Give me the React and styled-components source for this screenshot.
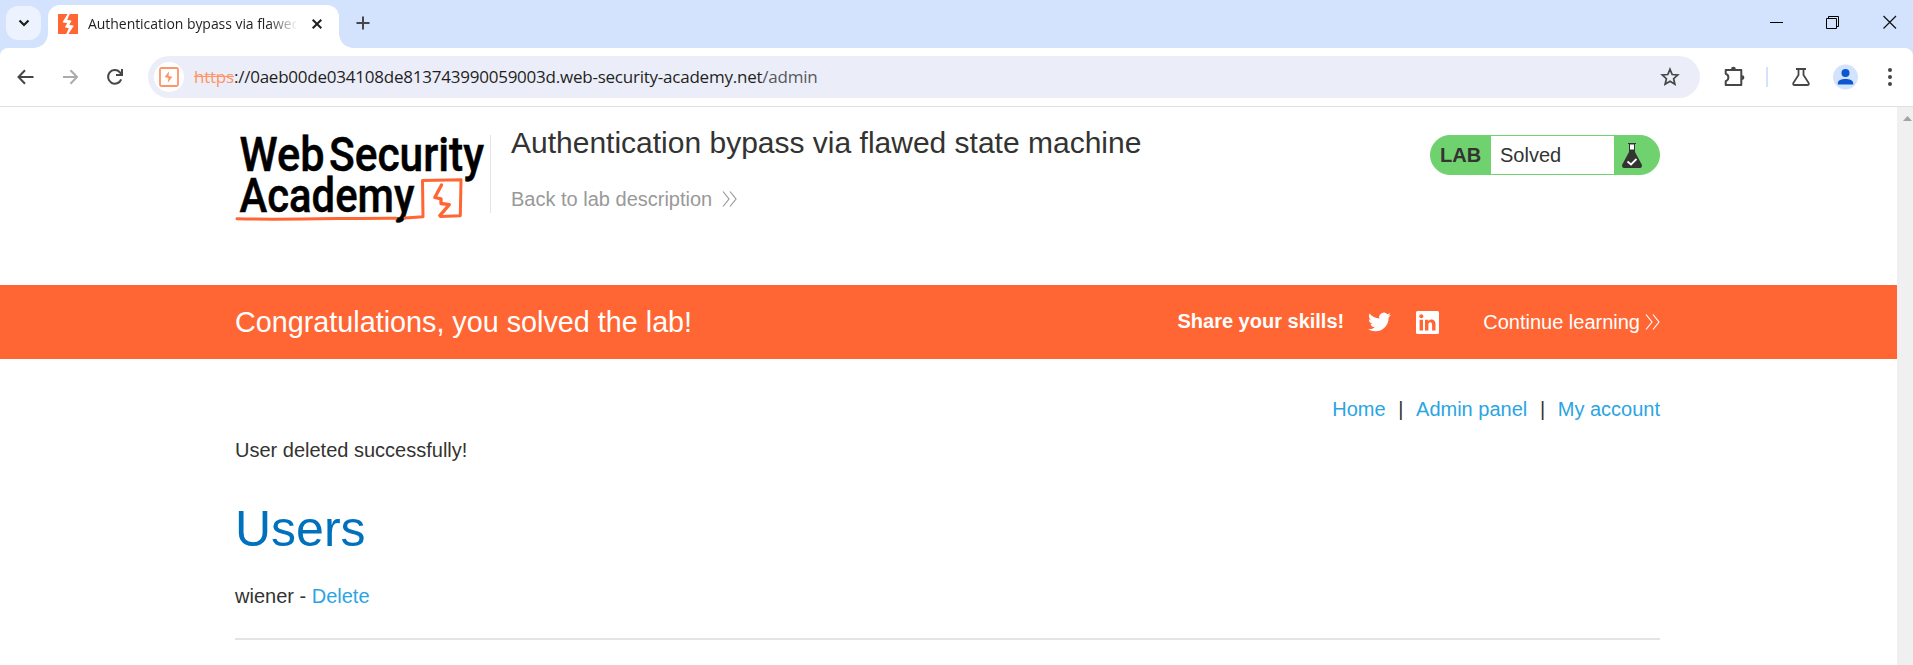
import React from "react";
import styled, { createGlobalStyle } from "styled-components";

const Global = createGlobalStyle`
  * { box-sizing: border-box; }
  html, body { margin: 0; padding: 0; background: #fff; overflow: hidden; }
  body { font-family: "Liberation Sans", Arial, sans-serif; font-size: 20px; color: #333332; }
  svg { display: block; flex: none; overflow: visible; }
`;

const Window = styled.div`
  width: 100%;
  height: 665px;
  display: flex;
  flex-direction: column;
`;

const TabStrip = styled.div`
  height: 48px;
  flex: none;
  display: flex;
  background: #d3e2fd;
  padding: 5px 0 0 6px;
`;

const TabSearch = styled.div`
  width: 35px;
  height: 34px;
  margin-top: 1px;
  border-radius: 12px;
  background: #ecf2fe;
  display: flex;
  align-items: center;
  justify-content: center;
`;

const Tab = styled.div`
  position: relative;
  width: 291px;
  height: 43px;
  margin-left: 7px;
  padding: 0 14px 6px 10px;
  display: flex;
  align-items: center;
  border-radius: 12px 12px 0 0;
  background: #fff;
  &::before, &::after {
    content: "";
    position: absolute;
    bottom: 0;
    width: 14px;
    height: 14px;
  }
  &::before {
    left: -14px;
    background: radial-gradient(circle at 0 0, transparent 13.5px, #fff 14px);
  }
  &::after {
    right: -14px;
    background: radial-gradient(circle at 100% 0, transparent 13.5px, #fff 14px);
  }
`;

const TabTitle = styled.div`
  width: 208px;
  margin: 1px 16px 0 10px;
  overflow: hidden;
  white-space: nowrap;
  font: 14px/22px "Open Sans", "Noto Sans", sans-serif;
  letter-spacing: -0.05px;
  color: #1f1f1f;
  mask-image: linear-gradient(to right, #000 180px, transparent 210px);
`;

const NewTab = styled.div`
  margin: 11px 0 0 17px;
`;

const WindowControls = styled.div`
  margin: 10px 16px 0 auto;
  display: flex;
  gap: 43px;
`;

const Toolbar = styled.div`
  height: 59px;
  flex: none;
  display: flex;
  align-items: center;
  padding: 0 16px 1px 16px;
  border-bottom: 1px solid #dfe0e1;
  border-radius: 8px 8px 0 0;
  background: #fff;
`;

const Chrome = styled.div`
  flex: none;
  background: linear-gradient(#d3e2fd 60px, #fff 60px);
`;

const NavButtons = styled.div`
  display: flex;
  align-items: center;
  gap: 25px;
  width: 132px;
`;

const AddressBar = styled.div`
  width: 1552px;
  height: 42px;
  border-radius: 21px;
  background: #ebeef8;
  display: flex;
  align-items: center;
  padding: 0 20px 0 6px;
`;

const SiteBadge = styled.div`
  width: 30px;
  height: 30px;
  border-radius: 50%;
  background: #fff;
  display: flex;
  align-items: center;
  justify-content: center;
`;

const Address = styled.div`
  flex: 1;
  margin: 1px 0 0 10px;
  white-space: nowrap;
  font: 17px/26px "Open Sans", "Noto Sans", sans-serif;
  letter-spacing: -0.23px;
  color: #1f1f1f;
`;

const Scheme = styled.span`
  color: #ff9466;
  text-decoration: line-through;
`;

const UrlPath = styled.span`
  color: #55585e;
`;

const ToolbarActions = styled.div`
  display: flex;
  align-items: center;
  margin-left: 23px;
`;

const Divider = styled.div`
  width: 2px;
  height: 20px;
  margin: 0 23px 0 21px;
  background: #d3e2fd;
`;

const Viewport = styled.div`
  flex: 1;
  display: flex;
  min-height: 0;
`;

const Page = styled.main`
  flex: 1;
  min-width: 0;
`;

const Scrollbar = styled.div`
  width: 16px;
  background: #f0f0f0;
  padding: 9px 0 0 6px;
`;

const Container = styled.div`
  width: 1425px;
  margin-left: 235px;
`;

const LabHeader = styled(Container)`
  height: 178px;
  padding-top: 28px;
  display: flex;
  align-items: flex-start;
`;

const LogoBox = styled.div`
  width: 256px;
  height: 78px;
  border-right: 1px solid #e4e4e4;
`;

const TitleBlock = styled.div`
  margin: -9px 0 0 20px;
  flex: 1;
`;

const Title = styled.h2`
  margin: 0;
  font-size: 30px;
  line-height: 34px;
  font-weight: 400;
  white-space: nowrap;
`;

const BackLink = styled.a`
  margin-top: 27px;
  display: flex;
  align-items: center;
  gap: 10px;
  line-height: 24px;
  color: #999;
`;

const Status = styled.div`
  width: 230px;
  height: 40px;
  border: 1px solid #70d16f;
  border-radius: 20px;
  background: #70d16f;
  display: flex;
  line-height: 39px;
  overflow: hidden;
`;

const StatusLabel = styled.div`
  width: 60px;
  padding-left: 9px;
  font-weight: 700;
`;

const StatusValue = styled.div`
  width: 123px;
  padding-left: 9px;
  background: #fff;
`;

const StatusIcon = styled.div`
  padding: 7px 0 0 8px;
`;

const Banner = styled.section`
  height: 74px;
  background: #ff6633;
  color: #fff;
`;

const BannerRow = styled(Container)`
  height: 74px;
  display: flex;
  align-items: center;
`;

const BannerTitle = styled.div`
  flex: 1;
  font-size: 28.75px;
  white-space: nowrap;
`;

const Share = styled.div`
  font-weight: 700;
  margin: -2px 24px 0 0;
`;

const Continue = styled.a`
  display: flex;
  align-items: center;
  gap: 5px;
  margin-left: 44px;
`;

const SocialIcons = styled.div`
  display: flex;
  align-items: center;
  gap: 25px;
`;

const TopLinks = styled.nav`
  display: flex;
  justify-content: flex-end;
  padding-top: 38px;
  line-height: 24px;
  white-space: pre;
`;

const Link = styled.a`
  color: #2ba5e2;
`;

const Separator = styled.span`
  width: 30.5px;
  text-align: center;
`;

const Message = styled.p`
  margin: 17px 0 0;
  line-height: 24px;
`;

const Heading = styled.h1`
  margin: 37px 0 0;
  font-size: 50px;
  line-height: 60px;
  font-weight: 400;
  color: #0071bd;
`;

const UserRow = styled.div`
  margin-top: 25px;
  line-height: 24px;
`;

const Rule = styled.div`
  margin-top: 30px;
  height: 2px;
  background: #e4e4e4;
`;

function Favicon() {
  return (
    <svg width="20" height="20" viewBox="0 0 20 20">
      <rect width="20" height="20" fill="#ff6633" />
      <path d="M11.8 0 H9.6 L4.5 8.3 L9.2 9.3 L6.9 13.3 L10.8 14.3 L8.2 20 H10.4 L15.8 11.7 L11.3 10.7 L13.6 6.7 L9.2 5.8 Z" fill="#fff" />
    </svg>
  );
}

function SiteIcon() {
  return (
    <svg width="20" height="20" viewBox="0 0 20 20">
      <rect x="1" y="1" width="18" height="18" rx="1.5" fill="none" stroke="#ff9466" strokeWidth="1.8" />
      <g transform="translate(-.5 1) scale(.95)">
        <path d="M11.2 3.5 L6.4 9.5 L10.4 10.5 L9.8 15.6 L14.6 9.2 L10.6 8.4 Z" fill="#ff9466" />
      </g>
    </svg>
  );
}

function Chevrons({ color }) {
  return (
    <svg width="15" height="16" viewBox="0 0 15 16">
      <path d="M1 .5 L7 8 L1 15.5 M8 .5 L14 8 L8 15.5" fill="none" stroke={color} strokeWidth="1.2" />
    </svg>
  );
}

function Logo() {
  return (
    <svg width="256" height="90" viewBox="235 135 256 90" fill="#000">
      <g fontFamily="Roboto, sans-serif" fontWeight="500" fontSize="48" stroke="#000" strokeWidth=".5">
        <text x="239.500" y="171" textLength="85" lengthAdjust="spacingAndGlyphs">Web</text>
        <text x="329" y="171" textLength="155" lengthAdjust="spacingAndGlyphs">Security</text>
        <text x="239.500" y="211.700" textLength="175" lengthAdjust="spacingAndGlyphs">Academy</text>
      </g>
      <g fill="none" stroke="#ff6633" strokeLinejoin="round" strokeLinecap="round">
        <path d="M237 218.700 C280 220.200 360 217.800 396 218.200 M405 218 L423 216.800 L422.500 180.500 L461 179.700 L460.300 215.800 L440.500 216.400" strokeWidth="3" />
        <path d="M441.500 185 L434.800 197.500 L441 198.800 L441 203.500 L449.300 204.600 L439.800 215.600" strokeWidth="3.300" />
      </g>
    </svg>
  );
}

export default function App() {
  return (
    <Window>
      <Global />
      <Chrome>
        <TabStrip>
          <TabSearch>
            <svg width="12" height="8" viewBox="0 0 12 8"><path d="M1.500 1.500 L6 6 L10.500 1.500" fill="none" stroke="#1f1f1f" strokeWidth="2.200" /></svg>
          </TabSearch>
          <Tab>
            <Favicon />
            <TabTitle>Authentication bypass via flawed state machine</TabTitle>
            <svg width="10" height="10" viewBox="0 0 10 10"><path d="M.7 .7 L9.300 9.300 M9.300 .7 L.7 9.300" stroke="#1f1f1f" strokeWidth="2" /></svg>
          </Tab>
          <NewTab>
            <svg width="14" height="14" viewBox="0 0 14 14"><path d="M7 .5 V13.500 M.5 7 H13.500" stroke="#444746" strokeWidth="2" /></svg>
          </NewTab>
          <WindowControls>
            <svg width="13" height="14" viewBox="0 0 13 14"><path d="M0 7.500 H13" stroke="#000" /></svg>
            <svg width="14" height="14" viewBox="0 0 14 14"><path d="M.5 3.500 H10.500 V13.500 H.5 Z M2.500 3 V1.500 H12.500 V11.500 H11" fill="none" stroke="#000" /></svg>
            <svg width="14" height="14" viewBox="0 0 14 14"><path d="M.5 1 L13 13.500 M13 1 L.5 13.500" stroke="#111" strokeWidth="1.200" /></svg>
          </WindowControls>
        </TabStrip>
        <Toolbar>
          <NavButtons>
            <svg width="19" height="16" viewBox="0 0 19 16"><path d="M17.500 8 H3 M9 1.300 L2.500 8 L9 14.700" fill="none" stroke="#444746" strokeWidth="2" /></svg>
            <svg width="19" height="16" viewBox="0 0 19 16"><path d="M3 8 H16.500 M10.500 1.300 L17 8 L10.500 14.700" fill="none" stroke="#aaacab" strokeWidth="2" /></svg>
            <svg width="20" height="16" viewBox="0 0 20 16"><path d="M17.200 10.300 A6.800 6.800 0 1 1 15.800 3.200 L18 5.600 M18 0 V6 H12" fill="none" stroke="#444746" strokeWidth="2" /></svg>
          </NavButtons>
          <AddressBar>
            <SiteBadge><SiteIcon /></SiteBadge>
            <Address><Scheme>https</Scheme>://0aeb00de034108de813743990059003d.web-security-academy.net<UrlPath>/admin</UrlPath></Address>
            <svg width="20" height="20" viewBox="0 0 20 20"><path d="M10 2.300 L12.200 7.500 L17.800 8 L13.600 11.700 L14.900 17.200 L10 14.300 L5.100 17.200 L6.400 11.700 L2.200 8 L7.800 7.500 Z" fill="none" stroke="#444746" strokeWidth="1.700" /></svg>
          </AddressBar>
          <ToolbarActions>
            <svg width="22" height="22" viewBox="0 0 22 22"><path d="M2.700 3.900 H18.300 V19 H2.700 V15.200 C6.300 13.800 6.300 9.200 2.700 7.800 Z" fill="none" stroke="#444746" strokeWidth="2" strokeLinejoin="round" /><path d="M8 3.200 A2.400 2.400 0 0 1 12.800 3.200 Z M19 9.200 A2.400 2.400 0 0 1 19 14 Z" fill="#444746" /></svg>
            <Divider />
            <svg width="20" height="20" viewBox="0 0 20 20"><path d="M5 2 H15 M7.500 2 V8 L2.300 16 Q1.800 18 3.500 18 H16.500 Q18.200 18 17.700 16 L12.500 8 V2" fill="none" stroke="#444746" strokeWidth="1.800" /></svg>
            <svg width="77" height="26" viewBox="0 0 77 26"><circle cx="34.500" cy="13" r="12.500" fill="#d3e2fd" /><circle cx="34.500" cy="9" r="4" fill="#0b57d0" /><path d="M26.800 20.500 V19 C26.800 13.500 42.200 13.500 42.200 19 V20.500 Z" fill="#0b57d0" /></svg>
            <svg width="4" height="20" viewBox="0 0 4 20"><g fill="#444746"><circle cx="2" cy="3" r="2" /><circle cx="2" cy="10" r="2" /><circle cx="2" cy="17" r="2" /></g></svg>
          </ToolbarActions>
        </Toolbar>
      </Chrome>
      <Viewport>
        <Page>
          <LabHeader>
            <LogoBox><Logo /></LogoBox>
            <TitleBlock>
              <Title>Authentication bypass via flawed state machine</Title>
              <BackLink>Back to lab description<Chevrons color="#999" /></BackLink>
            </TitleBlock>
            <Status>
              <StatusLabel>LAB</StatusLabel>
              <StatusValue>Solved</StatusValue>
              <StatusIcon>
                <svg width="20" height="25" viewBox="0 0 20 25"><path d="M7 1 H13 V9 L20 22 Q20 25 18 25 H2 Q0 25 0 22 L7 9 Z" fill="#333332" /><rect x="8" y="1.500" width="4" height="5" fill="#fff" /><path d="M6 .5 H14" stroke="#333332" /><path d="M5.500 18.500 L9 21.500 L14.500 16" fill="none" stroke="#fff" strokeWidth="1.800" /></svg>
              </StatusIcon>
            </Status>
          </LabHeader>
          <Banner>
            <BannerRow>
              <BannerTitle>Congratulations, you solved the lab!</BannerTitle>
              <Share>Share your skills!</Share>
              <SocialIcons>
                <svg width="23" height="22" viewBox="0 1.500 24 21"><path fill="#fff" d="M23.950 4.570a10 10 0 0 1-2.820.770 4.960 4.960 0 0 0 2.160-2.720c-.950.550-2 .960-3.130 1.180a4.920 4.920 0 0 0-8.380 4.480C7.690 8.090 4.070 6.130 1.640 3.160a4.820 4.820 0 0 0-.670 2.480c0 1.710.870 3.210 2.190 4.100a4.900 4.900 0 0 1-2.230-.620v.060a4.920 4.920 0 0 0 3.950 4.830 5 5 0 0 1-2.210.080 4.940 4.940 0 0 0 4.600 3.420A9.870 9.870 0 0 1 0 19.540a13.990 13.990 0 0 0 7.560 2.210c9.050 0 14-7.500 14-13.980 0-.210 0-.420-.020-.630a9.940 9.940 0 0 0 2.460-2.550z" /></svg>
                <svg width="23" height="23" viewBox="0 0 23 23"><rect width="23" height="23" rx="1.500" fill="#fff" /><g fill="#ff6633"><circle cx="5.300" cy="5.200" r="2" /><path d="M3.600 8.700 H7 V19.500 H3.600 Z M9 8.700 H12.200 V10.200 C13.800 7.500 19.500 7.700 19.500 13 V19.500 H16.100 V13.700 C16.100 10.500 12.400 10.700 12.400 13.700 V19.500 H9 Z" /></g></svg>
              </SocialIcons>
              <Continue>Continue learning<Chevrons color="#fff" /></Continue>
            </BannerRow>
          </Banner>
          <Container>
            <TopLinks><Link>Home</Link><Separator>|</Separator><Link>Admin panel</Link><Separator>|</Separator><Link>My account</Link></TopLinks>
            <Message>User deleted successfully!</Message>
            <Heading>Users</Heading>
            <UserRow>wiener - <Link>Delete</Link></UserRow>
            <Rule />
          </Container>
        </Page>
        <Scrollbar>
          <svg width="9" height="5" viewBox="0 0 9 5"><path d="M0 5 L4.500 0 L9 5 Z" fill="#a3a3a3" /></svg>
        </Scrollbar>
      </Viewport>
    </Window>
  );
}
